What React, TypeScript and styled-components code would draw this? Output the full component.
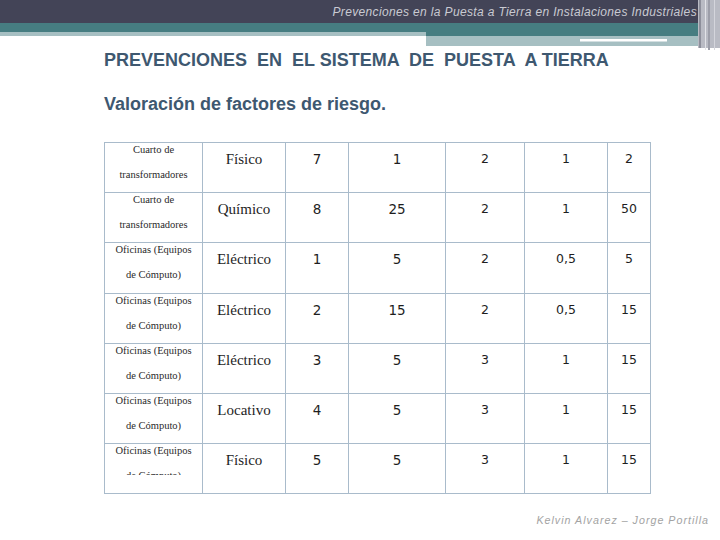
import React from "react";
import styled, { createGlobalStyle } from "styled-components";

const GlobalStyle = createGlobalStyle`
  html, body { margin: 0; padding: 0; background: #ffffff; }
  body { font-family: "Liberation Sans", Arial, sans-serif; }
`;

const Page = styled.div`
  width: 720px;
  height: 540px;
  overflow: hidden;
  display: flex;
  flex-direction: column;
  background: #ffffff;
`;

const Header = styled.header`
  position: relative;
  height: 50px;
  flex: none;
`;

const HeaderArt = styled.svg`
  position: absolute;
  inset: 0;
  display: block;
`;

const HeaderTitle = styled.div`
  position: relative;
  height: 23px;
  display: flex;
  align-items: center;
  justify-content: flex-end;
  padding-right: 23px;
  font-family: "Liberation Sans", Arial, sans-serif;
  font-style: italic;
  font-size: 12px;
  letter-spacing: 0.35px;
  color: #c9cad2;
  white-space: nowrap;
`;

const Content = styled.main`
  flex: 1;
  display: flex;
  flex-direction: column;
  padding-left: 104px;
`;

const Title = styled.h1`
  margin: 0;
  font-family: "Liberation Sans", Arial, sans-serif;
  font-weight: bold;
  font-size: 18px;
  line-height: 20px;
  color: #3e5870;
  white-space: pre;
`;

const Subtitle = styled.h2`
  margin: 24px 0 0;
  font-family: "Liberation Sans", Arial, sans-serif;
  font-weight: bold;
  font-size: 18px;
  line-height: 20px;
  color: #3e5870;
`;

const Table = styled.table`
  margin-top: 28px;
  width: 547px;
  table-layout: fixed;
  border-collapse: collapse;
  border: 1px solid #a9bbcb;
`;

const TableRow = styled.tr`
  height: 50.2px;
`;

const Cell = styled.td<{ $font: "place" | "serif" | "sans" | "sansLg" }>`
  padding: 0;
  border: 1px solid #a9bbcb;
  vertical-align: top;
  text-align: center;
  color: #1e1e1e;
  overflow: hidden;
  font-family: ${(p) =>
    p.$font === "sans" || p.$font === "sansLg"
      ? `"DejaVu Sans", Verdana, sans-serif`
      : `"Liberation Serif", "Times New Roman", serif`};
  font-size: ${(p) =>
    p.$font === "place" ? "10.5px" : p.$font === "sans" ? "12.5px" : p.$font === "sansLg" ? "13.5px" : "15px"};
  line-height: ${(p) => (p.$font === "place" ? "25px" : "24px")};
  padding-top: ${(p) => (p.$font === "place" ? "0" : "4px")};
`;

const PlaceText = styled.div<{ $clip?: boolean }>`
  margin-top: -6px;
  color: #2a2a2a;
  white-space: nowrap;
  overflow: hidden;
  max-height: ${(p) => (p.$clip ? "37px" : "none")};
`;

const Footer = styled.footer`
  flex: none;
  height: 26px;
  padding-right: 11px;
  text-align: right;
  font-family: "Liberation Sans", Arial, sans-serif;
  font-style: italic;
  font-size: 10.7px;
  letter-spacing: 1px;
  color: #a3a3a3;
`;

type Row = [string, string, string, string, string, string, string];

const rows: Row[] = [
  ["Cuarto de|transformadores", "Físico", "7", "1", "2", "1", "2"],
  ["Cuarto de|transformadores", "Químico", "8", "25", "2", "1", "50"],
  ["Oficinas (Equipos|de Cómputo)", "Eléctrico", "1", "5", "2", "0,5", "5"],
  ["Oficinas (Equipos|de Cómputo)", "Eléctrico", "2", "15", "2", "0,5", "15"],
  ["Oficinas (Equipos|de Cómputo)", "Eléctrico", "3", "5", "3", "1", "15"],
  ["Oficinas (Equipos|de Cómputo)", "Locativo", "4", "5", "3", "1", "15"],
  ["Oficinas (Equipos|de Cómputo)", "Físico", "5", "5", "3", "1", "15"],
];

const colWidths = [98, 83, 63, 97, 79, 83, 43];

export default function App() {
  return (
    <>
      <GlobalStyle />
      <Page>
        <Header>
          <HeaderArt width="720" height="50" viewBox="0 0 720 50">
            <rect x="0" y="0" width="720" height="23" fill="#434457" />
            <rect x="0" y="23" width="720" height="13" fill="#467d81" />
            <rect x="0" y="32" width="426" height="4" fill="#a6bfc2" />
            <rect x="426" y="36" width="281" height="10" fill="#a6bfc2" />
            <rect x="580" y="39" width="87" height="2.5" fill="#ffffff" />
            <rect x="698" y="0" width="22" height="48" fill="#b9bbc4" />
            <rect x="699" y="0" width="2" height="48" fill="#8d8f9b" />
            <rect x="705" y="0" width="1" height="50" fill="#e2e3e8" />
            <rect x="708" y="0" width="2" height="50" fill="#9c9ea9" />
            <rect x="714" y="0" width="1" height="50" fill="#d4d5dc" />
          </HeaderArt>
          <HeaderTitle>Prevenciones en la Puesta a Tierra en Instalaciones Industriales</HeaderTitle>
        </Header>
        <Content>
          <Title>{"PREVENCIONES  EN  EL SISTEMA  DE  PUESTA  A TIERRA"}</Title>
          <Subtitle>Valoración de factores de riesgo.</Subtitle>
          <Table>
            <colgroup>
              {colWidths.map((w, i) => (
                <col key={i} style={{ width: w }} />
              ))}
            </colgroup>
            <tbody>
              {rows.map((r, ri) => {
                const [l1, l2] = r[0].split("|");
                return (
                  <TableRow key={ri}>
                    <Cell $font="place">
                      <PlaceText $clip={ri === rows.length - 1}>
                        {l1}
                        <br />
                        {l2}
                      </PlaceText>
                    </Cell>
                    <Cell $font="serif">{r[1]}</Cell>
                    {r.slice(2).map((v, ci) => (
                      <Cell key={ci} $font={ci < 2 ? "sansLg" : "sans"}>
                        {v}
                      </Cell>
                    ))}
                  </TableRow>
                );
              })}
            </tbody>
          </Table>
        </Content>
        <Footer>Kelvin Alvarez – Jorge Portilla</Footer>
      </Page>
    </>
  );
}
